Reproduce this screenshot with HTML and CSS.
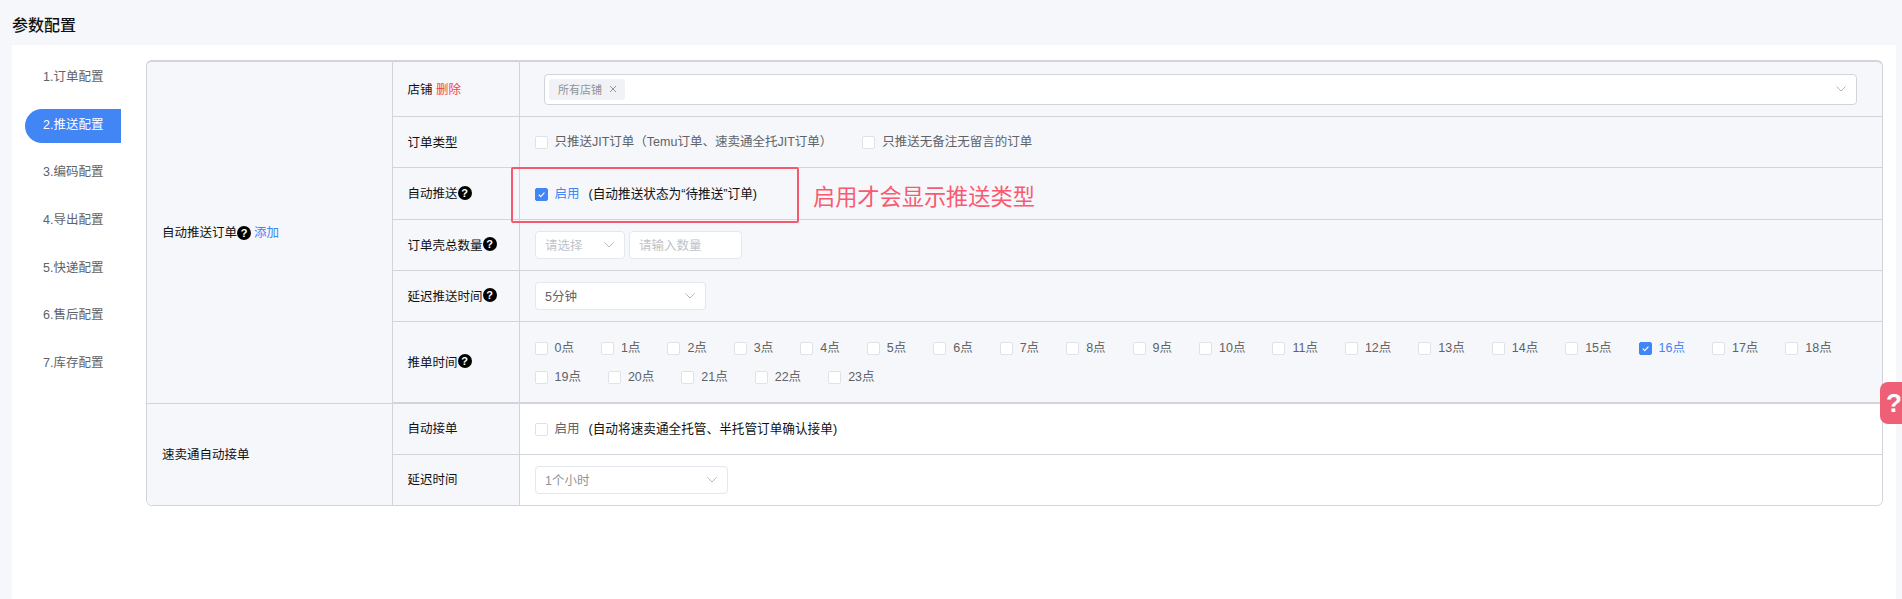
FILE: index.html
```html
<!DOCTYPE html>
<html lang="zh-CN">
<head>
<meta charset="utf-8">
<title>参数配置</title>
<link rel="stylesheet" href="styles.css">
</head>
<body>
<div class="app">
  <h1 class="title">参数配置</h1>
  <main class="panel">
    <nav class="nav">
      <a class="nav-item">1.订单配置</a>
      <a class="nav-item active">2.推送配置</a>
      <a class="nav-item">3.编码配置</a>
      <a class="nav-item">4.导出配置</a>
      <a class="nav-item">5.快递配置</a>
      <a class="nav-item">6.售后配置</a>
      <a class="nav-item">7.库存配置</a>
    </nav>
    <div class="table">
      <section class="group group-a">
        <div class="group-label">自动推送订单<i class="help">?</i><a class="link">添加</a></div>
        <div class="rows">
          <div class="row row-55">
            <div class="label">店铺 <a class="danger">删除</a></div>
            <div class="content content-wide">
              <div class="multi">
                <span class="tag">所有店铺<svg class="tag-x" viewBox="0 0 8 8"><path d="M1 1l6 6M7 1L1 7"/></svg></span>
                <svg class="chev chev-end" viewBox="0 0 10 6"><path d="M.5.5L5 5 9.5.5"/></svg>
              </div>
            </div>
          </div>
          <div class="row row-51">
            <div class="label">订单类型</div>
            <div class="content">
              <label class="check"><span class="box"></span><span>只推送JIT订单（Temu订单、速卖通全托JIT订单）</span></label>
              <label class="check check-next"><span class="box"></span><span>只推送无备注无留言的订单</span></label>
            </div>
          </div>
          <div class="row row-52">
            <div class="label">自动推送<i class="help">?</i></div>
            <div class="content">
              <label class="check on"><span class="box"><svg viewBox="0 0 12 12"><path d="M3 6.2l2.2 2.2L9.2 4"/></svg></span><span>启用</span></label>
              <span class="note">(自动推送状态为“待推送”订单)</span>
            </div>
          </div>
          <div class="row row-51">
            <div class="label">订单壳总数量<i class="help">?</i></div>
            <div class="content">
              <div class="select select-90 placeholder"><span>请选择</span><svg class="chev" viewBox="0 0 10 6"><path d="M.5.5L5 5 9.5.5"/></svg></div>
              <div class="input placeholder">请输入数量</div>
            </div>
          </div>
          <div class="row row-51">
            <div class="label">延迟推送时间<i class="help">?</i></div>
            <div class="content">
              <div class="select select-170"><span>5分钟</span><svg class="chev" viewBox="0 0 10 6"><path d="M.5.5L5 5 9.5.5"/></svg></div>
            </div>
          </div>
          <div class="row row-hours">
            <div class="label">推单时间<i class="help">?</i></div>
            <div class="content hours">
              <label class="check"><span class="box"></span><span>0点</span></label>
              <label class="check"><span class="box"></span><span>1点</span></label>
              <label class="check"><span class="box"></span><span>2点</span></label>
              <label class="check"><span class="box"></span><span>3点</span></label>
              <label class="check"><span class="box"></span><span>4点</span></label>
              <label class="check"><span class="box"></span><span>5点</span></label>
              <label class="check"><span class="box"></span><span>6点</span></label>
              <label class="check"><span class="box"></span><span>7点</span></label>
              <label class="check"><span class="box"></span><span>8点</span></label>
              <label class="check"><span class="box"></span><span>9点</span></label>
              <label class="check"><span class="box"></span><span>10点</span></label>
              <label class="check"><span class="box"></span><span>11点</span></label>
              <label class="check"><span class="box"></span><span>12点</span></label>
              <label class="check"><span class="box"></span><span>13点</span></label>
              <label class="check"><span class="box"></span><span>14点</span></label>
              <label class="check"><span class="box"></span><span>15点</span></label>
              <label class="check on"><span class="box"><svg viewBox="0 0 12 12"><path d="M3 6.2l2.2 2.2L9.2 4"/></svg></span><span>16点</span></label>
              <label class="check"><span class="box"></span><span>17点</span></label>
              <label class="check"><span class="box"></span><span>18点</span></label>
              <label class="check"><span class="box"></span><span>19点</span></label>
              <label class="check"><span class="box"></span><span>20点</span></label>
              <label class="check"><span class="box"></span><span>21点</span></label>
              <label class="check"><span class="box"></span><span>22点</span></label>
              <label class="check"><span class="box"></span><span>23点</span></label>
            </div>
          </div>
        </div>
      </section>
      <section class="group group-b">
        <div class="group-label">速卖通自动接单</div>
        <div class="rows">
          <div class="row row-51">
            <div class="label">自动接单</div>
            <div class="content">
              <label class="check"><span class="box"></span><span>启用</span></label>
              <span class="note">(自动将速卖通全托管、半托管订单确认接单)</span>
            </div>
          </div>
          <div class="row row-50">
            <div class="label">延迟时间</div>
            <div class="content">
              <div class="select select-192"><span>1个小时</span><svg class="chev" viewBox="0 0 10 6"><path d="M.5.5L5 5 9.5.5"/></svg></div>
            </div>
          </div>
        </div>
      </section>
    </div>
  </main>
  <div class="callout"></div>
  <div class="callout-text">启用才会显示推送类型</div>
  <div class="float-help">?</div>
</div>
</body>
</html>
```

FILE: styles.css
```css
* { box-sizing: border-box; }
html, body { margin: 0; height: 100%; }
body {
  background: #f5f7fb;
  color: #111;
  font-family: "Liberation Sans", "Noto Sans CJK SC", sans-serif;
  font-size: 12.5px;
  overflow: hidden;
}
a { text-decoration: none; }
.app { position: relative; height: 599px; overflow: hidden; }
.title {
  margin: 0;
  height: 45px;
  padding: 16px 0 0 12px;
  font-size: 16px;
  line-height: 20px;
  font-weight: 500;
  color: #111;
}
.panel {
  display: flex;
  margin: 0 6px 0 12px;
  height: 554px;
  padding: 15px 13.5px 0 13px;
  background: #fff;
  gap: 24.5px;
}
.nav { width: 96px; flex: none; display: flex; flex-direction: column; gap: 13.67px; margin-top: 1px; }
.nav-item {
  height: 34px;
  line-height: 33px;
  padding-left: 18px;
  color: #606266;
}
.nav-item.active { background: #4285f4; color: #fff; border-radius: 17px 0 0 17px; }

.table {
  flex: 1;
  align-self: flex-start;
  border: 1px solid #d2d4db;
  border-top-width: 2px;
  border-radius: 6px;
  overflow: hidden;
  background: #f5f7fb;
}
.group { display: flex; }
.group-a { height: 342px; }
.group-b { background: #fff; }
.group-label {
  width: 246px;
  flex: none;
  display: flex;
  align-items: center;
  padding-left: 15.5px;
  background: #f5f7fb;
  border-right: 1px solid #d2d4db;
  line-height: 16px;
}
.group-a .group-label { border-bottom: 1px solid #d2d4db; }
.rows { flex: 1; display: flex; flex-direction: column; min-width: 0; }
.row { display: flex; border-bottom: 1px solid #d2d4db; }
.group-b .row:last-child { border-bottom: 0; }
.row-55 { height: 55px; }
.row-52 { height: 52px; }
.row-51 { height: 51px; }
.row-50 { height: 50px; }
.row-hours { height: 82px; border-bottom-width: 2px; }
.label {
  width: 127px;
  flex: none;
  display: flex;
  align-items: center;
  padding: 0 0 1.5px 15px;
  background: #f5f7fb;
  border-right: 1px solid #d2d4db;
  white-space: pre;
}
.group-b .label { padding-bottom: 3px; }
.content {
  flex: 1;
  min-width: 0;
  display: flex;
  align-items: center;
  padding-left: 15px;
}
.content-wide { padding: 0 24.5px 0 24.5px; }
.help {
  display: inline-block;
  width: 14px;
  height: 14px;
  flex: none;
  border-radius: 50%;
  background: #000;
  color: #fff;
  font-style: normal;
  font-weight: 700;
  font-size: 11px;
  line-height: 14px;
  text-align: center;
}
.link { color: #4285f4; margin-left: 3px; }
.danger { color: #f4433c; }

.multi {
  flex: 1;
  height: 31px;
  display: flex;
  align-items: center;
  justify-content: space-between;
  padding: 0 10px 0 4px;
  background: #fff;
  border: 1px solid #d2d4db;
  border-radius: 4px;
}
.tag {
  height: 21px;
  width: 76px;
  display: flex;
  align-items: center;
  gap: 7px;
  padding-left: 9px;
  background: #f0f2f5;
  border-radius: 3px;
  font-size: 11px;
  color: #909399;
}
.tag-x { width: 8px; height: 8px; fill: none; stroke: #909399; stroke-width: 1; }
.chev { width: 10px; height: 6px; flex: none; fill: none; stroke: #b4b7be; stroke-width: 1; }

.check { display: inline-flex; height: 16px; line-height: 16px; color: #606266; white-space: nowrap; }
.box {
  width: 13px;
  height: 13px;
  flex: none;
  margin: 2px 7px 0 0;
  background: #fff;
  border: 1px solid #dfe2e8;
  border-radius: 2px;
}
.box svg { display: block; width: 11px; height: 11px; fill: none; stroke: #fff; stroke-width: 1.2; }
.check.on { color: #4285f4; }
.check.on .box { background: #4285f4; border-color: #4285f4; }
.check-next { margin-left: 30px; }
.note { margin-left: 9px; color: #111; line-height: 16px; font-size: 12.65px; }

.select, .input {
  height: 28px;
  display: flex;
  align-items: center;
  background: #fff;
  border: 1px solid #e4e7ed;
  border-radius: 4px;
  color: #606266;
}
.select { justify-content: space-between; padding: 0 10px 0 9.5px; }
.select span { margin-top: -2px; }
.select-90 { width: 90px; }
.select-170 { width: 171.5px; }
.select-192 { width: 193.5px; color: #909399; }
.input { width: 113px; margin-left: 4px; padding: 0 0 2px 9.5px; }
.placeholder { color: #c0c4cc; }

.hours { flex-wrap: wrap; align-content: center; gap: 13px 27px; padding-right: 0; }

.callout {
  position: absolute;
  left: 511px;
  top: 167px;
  width: 288px;
  height: 56px;
  border: 2px solid #f6596e;
  border-radius: 2px;
}
.callout-text {
  position: absolute;
  left: 813px;
  top: 183px;
  font-size: 22.2px;
  line-height: 30px;
  color: #fa5a70;
}
.float-help {
  position: absolute;
  left: 1880px;
  top: 382px;
  width: 22px;
  height: 42px;
  padding-left: 6px;
  border-radius: 8px 0 0 8px;
  background: #ef6076;
  color: #fff;
  font-size: 26px;
  font-weight: 700;
  line-height: 42px;
}
```
